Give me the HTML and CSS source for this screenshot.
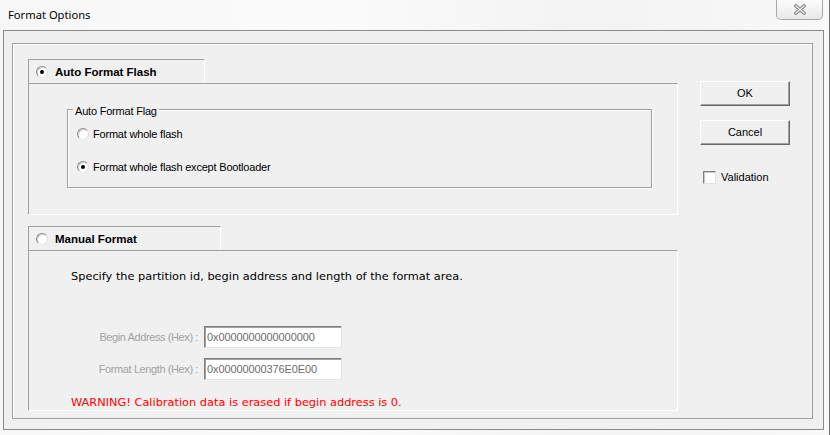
FILE: index.html
```html
<!DOCTYPE html>
<html>
<head>
<meta charset="utf-8">
<title>Format Options</title>
<link rel="stylesheet" href="styles.css">
</head>
<body>
<div class="window">
  <div class="titlebar">
    <span class="title">Format Options</span>
    <div class="close">
      <svg width="14" height="11" viewBox="0 0 14 11">
        <path d="M3 2 L11 9 M11 2 L3 9" stroke="#7d7d7d" stroke-width="3.6" stroke-linecap="round" fill="none"/>
        <path d="M3 2 L11 9 M11 2 L3 9" stroke="#f4f4f4" stroke-width="1.6" stroke-linecap="round" fill="none"/>
      </svg>
    </div>
  </div>
  <div class="client">
    <div class="frame">
      <div class="main">
        <div class="tab tab-auto"><span class="radio checked"></span><span>Auto Format Flash</span></div>
        <div class="panel panel-auto">
          <fieldset class="group">
            <legend>Auto Format Flag</legend>
            <div class="opt opt-first"><span class="radio"></span><span>Format whole flash</span></div>
            <div class="opt opt-second"><span class="radio checked"></span><span>Format whole flash except Bootloader</span></div>
          </fieldset>
        </div>
        <div class="tab tab-manual"><span class="radio"></span><span>Manual Format</span></div>
        <div class="panel panel-manual">
          <p class="desc">Specify the partition id, begin address and length of the format area.</p>
          <div class="fields">
            <span class="field-label">Begin Address (Hex) :</span>
            <input class="field" type="text" value="0x0000000000000000" readonly>
            <span class="field-label">Format Length (Hex) :</span>
            <input class="field" type="text" value="0x00000000376E0E00" readonly>
          </div>
          <p class="warning">WARNING! Calibration data is erased if begin address is 0.</p>
        </div>
      </div>
      <div class="side">
        <button class="btn">OK</button>
        <button class="btn btn-cancel">Cancel</button>
        <div class="check"><span class="box"></span><span>Validation</span></div>
      </div>
    </div>
  </div>
</div>
</body>
</html>
```
FILE: styles.css
```css
* { box-sizing: border-box; }

html, body {
  margin: 0;
  padding: 0;
}

body {
  width: 830px;
  height: 435px;
  overflow: hidden;
  font-family: "Liberation Sans", Arial, sans-serif;
  background: #ffffff;
}

.window {
  width: 830px;
  height: 435px;
  display: flex;
  flex-direction: column;
  background: linear-gradient(90deg, #f7f7f7 0%, #fbfbfb 40%, #f3f3f3 70%, #f8f8f8 100%);
  border-right: 1px solid #6e6e6e;
}

.titlebar {
  height: 30px;
  flex-shrink: 0;
  display: flex;
  align-items: flex-start;
}

.title {
  font-family: "Noto Sans", "Open Sans", sans-serif;
  font-size: 11.2px;
  line-height: 30px;
  padding-left: 8px;
  color: #000;
}

.close {
  margin-left: auto;
  margin-right: 6px;
  width: 47px;
  height: 20px;
  border: 1px solid #a8a8a8;
  border-top: none;
  border-radius: 0 0 5px 5px;
  background: linear-gradient(#fbfbfb, #e9e9e9);
  display: flex;
  align-items: center;
  justify-content: center;
  padding-bottom: 1px;
}

.client {
  margin: 0 5px 5px 3px;
  height: 400px;
  border: 1px solid #8a8a8a;
  background: #f0f0f0;
  padding: 12px 10px 10px 8px;
}

.frame {
  height: 100%;
  border: 1px solid #a0a0a0;
  box-shadow: inset 1px 1px 0 #ffffff;
  display: flex;
  padding: 15px 0 0 15px;
}

.main {
  width: 650px;
  display: flex;
  flex-direction: column;
}

.tab {
  height: 24px;
  display: flex;
  align-items: center;
  gap: 7px;
  padding: 1px 0 0 7px;
  border-top: 1px solid #a0a0a0;
  border-left: 1px solid #a0a0a0;
  border-right: 1px solid #ffffff;
  font-weight: bold;
  font-size: 11.5px;
  line-height: 12px;
  color: #000;
}

.tab-auto { width: 177px; }
.tab-manual { width: 193px; margin-top: 11px; }

.panel {
  border: 1px solid;
  border-color: #a0a0a0 #ffffff #ffffff #a0a0a0;
}

.panel-auto {
  height: 132px;
  padding-top: 17px;
}

.radio {
  width: 12px;
  height: 12px;
  flex-shrink: 0;
  border-radius: 50%;
  border: 1px solid;
  border-color: #8c8c8c #dcdcdc #e8e8e8 #8c8c8c;
  background: #ffffff;
  box-shadow: inset 1px 1px 0 #d0d0d0;
  display: grid;
  place-items: center;
}

.radio.checked::after {
  content: "";
  width: 4px;
  height: 4px;
  border-radius: 50%;
  background: #000;
}

.group {
  margin: 0 25px 0 38px;
  height: 87px;
  padding: 0 0 0 5px;
  border: 1px solid #a0a0a0;
  box-shadow: 1px 1px 0 #ffffff, inset 1px 1px 0 #ffffff;
  font-size: 11px;
  letter-spacing: -0.2px;
}

.group legend {
  padding: 4px 2px 0;
  line-height: 13px;
  font-size: 11px;
  color: #000;
}

.opt {
  display: flex;
  align-items: center;
  gap: 4px;
  height: 12px;
  padding-left: 4px;
  line-height: 12px;
  color: #000;
}

.opt-first { margin-top: 10px; }
.opt-second { margin-top: 21px; }

.panel-manual {
  height: 161px;
}

.desc {
  margin: 18px 0 0 42px;
  font-family: "DejaVu Sans", Verdana, sans-serif;
  font-size: 11.35px;
  line-height: 14px;
  color: #000;
}

.fields {
  margin-top: 43px;
  display: grid;
  grid-template-columns: 169px 138px;
  column-gap: 6px;
  row-gap: 10px;
  align-items: center;
}

.field-label {
  text-align: right;
  font-size: 11px;
  letter-spacing: -0.4px;
  color: #a3a3a3;
}

.field {
  width: 138px;
  height: 22px;
  margin: 0;
  padding: 0 0 0 2px;
  border: 1px solid;
  border-color: #7f7f7f #e3e3e3 #e3e3e3 #7f7f7f;
  box-shadow: inset 1px 1px 0 #a0a0a0;
  background: #ffffff;
  font-family: "Liberation Sans", Arial, sans-serif;
  font-size: 11px;
  letter-spacing: -0.1px;
  color: #6d6d6d;
  outline: none;
}

.warning {
  margin: 15px 0 0 42px;
  font-family: "DejaVu Sans", Verdana, sans-serif;
  font-size: 11.35px;
  line-height: 14px;
  color: #ff0000;
}

.side {
  margin-left: 22px;
  padding-top: 22px;
  width: 90px;
  display: flex;
  flex-direction: column;
}

.btn {
  width: 90px;
  height: 25px;
  margin: 0;
  padding: 0 0 1px;
  border: 1px solid;
  border-color: #ffffff #696969 #696969 #ffffff;
  box-shadow: inset -1px -1px 0 #a0a0a0;
  background: #f0f0f0;
  font-family: "Liberation Sans", Arial, sans-serif;
  font-size: 11px;
  color: #000;
}

.btn-cancel { margin-top: 14px; }

.check {
  margin: 26px 0 0 3px;
  display: flex;
  align-items: center;
  gap: 5px;
  font-size: 11px;
  line-height: 13px;
  color: #000;
}

.box {
  width: 13px;
  height: 13px;
  border: 1px solid;
  border-color: #7f7f7f #e3e3e3 #e3e3e3 #7f7f7f;
  box-shadow: inset 1px 1px 0 #c8c8c8;
  background: #ffffff;
}
```
